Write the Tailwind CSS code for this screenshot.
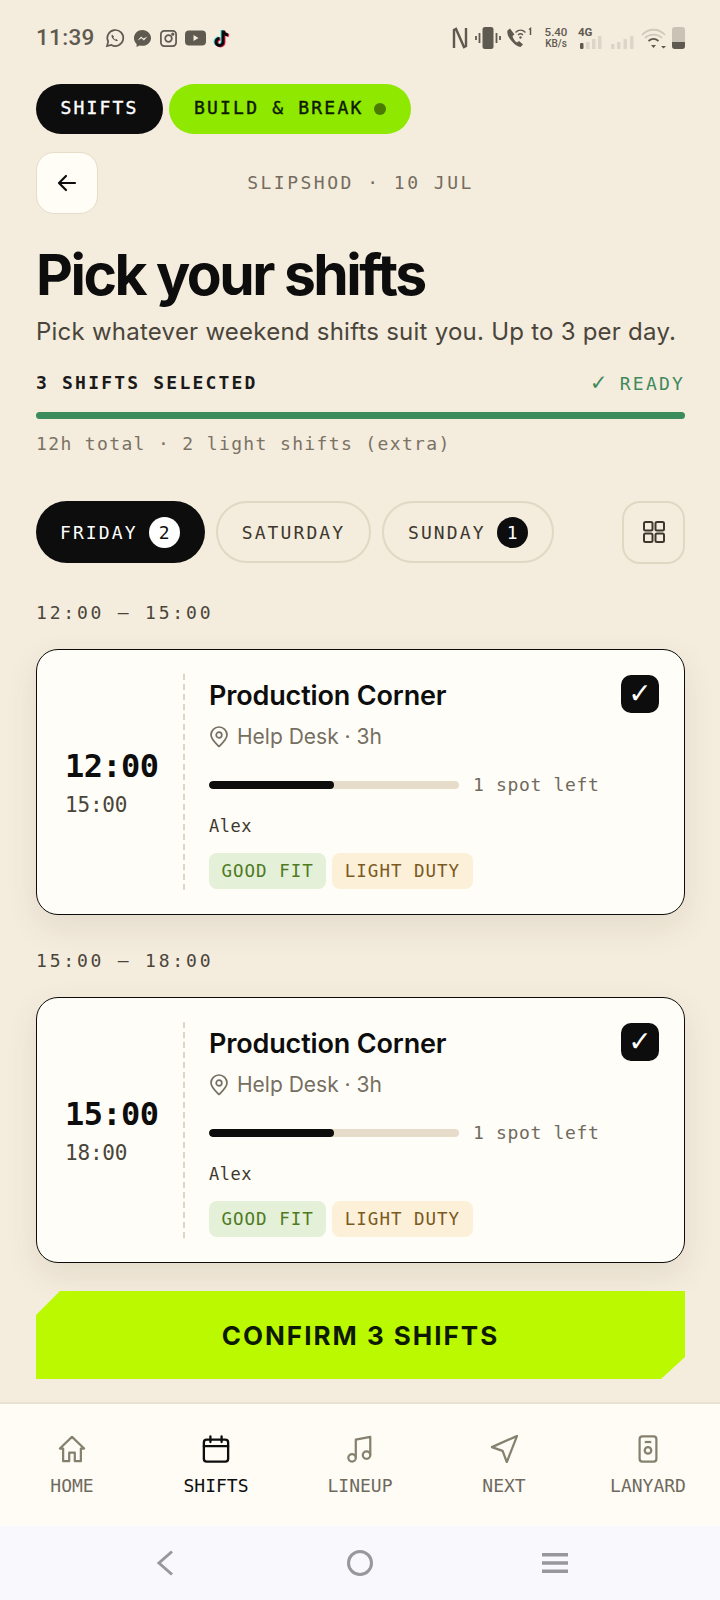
<!DOCTYPE html>
<html lang="en">
<head>
<meta charset="UTF-8">
<meta name="viewport" content="width=device-width, initial-scale=1.0">
<title>Pick your shifts</title>
<script src="https://cdn.jsdelivr.net/npm/@tailwindcss/browser@4"></script>
</head>
<body class="bg-[#f4ecdd] font-['Inter',sans-serif]">
<div class="w-[720px] h-[1600px] overflow-hidden flex flex-col">

  <!-- Status bar -->
  <div class="h-[76px] pl-9 pr-[35px] flex items-center justify-between text-[#5f5a50]">
    <div class="flex items-center gap-[5px]">
      <span class="font-['Roboto',sans-serif] font-medium text-[22.500px] tracking-[0.3px] mr-[5px]">11:39</span>
      <svg class="w-[20px] h-[20px]" viewBox="0 0 20 20" fill="none" stroke="currentColor" stroke-width="1.7"><path d="M2 18l1.2-4.3A8 8 0 1 1 6.4 17z"/><path d="M7 6.500c-1 1 -.6 3 1.300 4.800s3.700 2.300 4.700 1.300l-1.600-1.600-1 .6c-.8-.3-1.700-1.200-2-2l.6-1z" fill="currentColor" stroke="none"/></svg>
      <svg class="w-[19px] h-[19px] ml-[3px]" viewBox="0 0 20 20"><path fill="currentColor" d="M10 1C5 1 1 4.700 1 9.500c0 2.500 1 4.700 2.800 6.200V19l3-1.700c1 .3 2.100.4 3.200.4 5 0 9-3.700 9-8.200S15 1 10 1z"/><path fill="#f4ecdd" d="M4.800 12l3.700-4.200 2.500 2.200 4.200-2.200-3.700 4.200-2.500-2.200z"/></svg>
      <svg class="w-[19px] h-[19px] ml-[2px]" viewBox="0 0 20 20" fill="none" stroke="currentColor" stroke-width="1.800"><rect x="2" y="2" width="16" height="16" rx="3.500"/><circle cx="10" cy="10" r="3.500"/><circle cx="14.500" cy="5.500" r=".8" fill="currentColor"/></svg>
      <svg class="w-[21px] h-[16px] ml-[2px]" viewBox="0 0 21 16"><rect width="21" height="15" y=".5" rx="4" fill="currentColor"/><path d="M8.500 5l5 3-5 3z" fill="#f4ecdd"/></svg>
      <svg class="w-[18px] h-[20px] ml-[2px]" viewBox="0 0 18 20" fill="none" stroke-width="3"><path stroke="#45dfe0" d="M9 2v11.500a3.500 3.500 0 1 1-3.500-3.500M9 2c.4 2.500 2 4 5 4.400"/><path stroke="#f0204f" d="M11 3v11.500a3.500 3.500 0 1 1-3.500-3.500M11 3c.4 2.500 2 4 5 4.400"/><path stroke="#0b0b0b" d="M10 2.500v11.500a3.500 3.500 0 1 1-3.500-3.500M10 2.500c.4 2.500 2 4 5 4.400"/></svg>
    </div>
    <div class="flex items-center">
      <svg class="w-[16px] h-[22px]" viewBox="0 0 16 22" fill="none" stroke="currentColor" stroke-width="2.400"><path d="M2 21V3l2-1 8 18 2-1V1"/></svg>
      <svg class="w-[26px] h-[22px] ml-[7px]" viewBox="0 0 26 22"><rect x="7.500" y="0" width="11" height="22" rx="2.500" fill="currentColor"/><path d="M4.500 6v10M1 9v4M21.500 6v10M25 9v4" stroke="currentColor" stroke-width="1.800" fill="none"/></svg>
      <svg class="w-[26px] h-[22px] ml-[5px]" viewBox="0 0 26 22"><path fill="currentColor" d="M4 1.500 1.500 3.500c-1.500 5 6 15 13 16.500l2.500-2.500-4-3.500-2 1.500c-2-1-4-4-4.500-6.500l2-1.500z"/><path d="M9.500 5.500c3-3 7-3 10 0M12 8c1.500-1.400 3.500-1.400 5 0" fill="none" stroke="currentColor" stroke-width="1.400"/><circle cx="14.500" cy="10.500" r="1.200" fill="currentColor"/><path d="M23 2.500l1.500-1V8" stroke="currentColor" stroke-width="1.500" fill="none"/></svg>
      <div class="ml-[12px] w-[24px] flex flex-col items-center font-['Roboto',sans-serif] font-medium leading-[12px] text-[11.500px]"><span>5.40</span><span class="text-[10px]">KB/s</span></div>
      <div class="ml-[10px] w-[58px] flex flex-col gap-0 relative h-[24px]">
        <span class="font-['Roboto',sans-serif] font-bold text-[11.500px] leading-[12px]">4G</span>
        <svg class="absolute left-0 top-[7px]" width="58" height="17" viewBox="0 0 58 17"><rect x="2" y="10" width="3.500" height="6" rx="1" fill="#5f5a50"/><path fill="#dcd6c9" d="M8 9h3.500v7H8zM14 6h3.500v10H14zM20 3h3.500v13H20zM33 11h3.500v5H33zM39 9h3.500v7H39zM45.500 6h3.500v10h-3.500zM52 3h3.500v13H52z"/></svg>
      </div>
      <svg class="w-[26px] h-[22px] ml-[5px]" viewBox="0 0 26 22" fill="none"><path d="M1 8c6-7 17-7 23 0M4 11c4.500-4.500 12.500-4.500 17 0" stroke="#cfc9bc" stroke-width="1.800"/><path d="M7.500 14c3-2.500 7-2.500 10 0" stroke="#5f5a50" stroke-width="1.800"/><path d="M10 18h5l-2.500 3zM20 19h5l-2.500 2.500z" fill="#5f5a50"/></svg>
      <div class="ml-[5px] w-[13px] h-[22px] rounded-[3px] bg-[#c9c3b5] relative overflow-hidden"><div class="absolute bottom-0 left-0 right-0 h-[7px] bg-[#5f5a50]"></div></div>
    </div>
  </div>

  <!-- Main content -->
  <div class="flex-1 pl-9 pr-[35px] flex flex-col min-h-0">
    <div class="h-[50px] mt-[8px] flex gap-[6px] font-['DejaVu_Sans_Mono',monospace] text-[18px] leading-[24px] tracking-[2.200px] [-webkit-text-stroke:0.4px]">
      <div class="w-[127px] rounded-full bg-[#0d0d0d] text-white flex items-center justify-center pb-[2px]">SHIFTS</div>
      <div class="w-[242px] rounded-full bg-[#8fe800] text-[#0d1a00] flex items-center pl-[25px] pb-[2px]">BUILD &amp; BREAK<span class="ml-[11px] mt-[2px] w-[12px] h-[12px] rounded-full bg-[#4b7a00]"></span></div>
    </div>

    <div class="mt-[18px] h-[62px] relative flex items-center justify-center">
      <div class="absolute left-0 top-0 w-[62px] h-[62px] rounded-[18px] bg-[#fffdf6] border border-[#e5dcc9] flex items-center justify-center">
        <svg class="w-[24px] h-[24px]" viewBox="0 0 24 24" fill="none" stroke="#0d0d0d" stroke-width="2.200" stroke-linecap="round" stroke-linejoin="round"><path d="M20 12H4.500M11 5l-7 7 7 7"/></svg>
      </div>
      <span class="font-['DejaVu_Sans_Mono',monospace] text-[18px] tracking-[2.500px] text-[#756d5f] mb-[2px]">SLIPSHOD · 10 JUL</span>
    </div>

    <h1 class="mt-[28px] text-[57px] leading-[66px] font-bold tracking-[-2.500px] text-[#0d0d0d]">Pick your shifts</h1>
    <p class="mt-[8px] text-[24px] leading-[32px] tracking-[0.24px] text-[#4a453b] whitespace-nowrap">Pick whatever weekend shifts suit you. Up to 3 per day.</p>

    <div class="mt-[22px] flex items-center justify-between font-['DejaVu_Sans_Mono',monospace] text-[18px] leading-[24px] tracking-[2.200px]">
      <span class="font-bold text-[#1a1a1a]">3 SHIFTS SELECTED</span>
      <span class="text-[#3f8a5c]"><span class="text-[24px] leading-none mr-[12px]">✓</span>READY</span>
    </div>
    <div class="mt-[16px] h-[7px] rounded-full bg-[#3b8c5c]"></div>
    <div class="mt-[13px] font-['DejaVu_Sans_Mono',monospace] text-[18px] leading-[24px] tracking-[1.360px] text-[#7a7264] whitespace-nowrap">12h total · 2 light shifts (extra)</div>

    <div class="mt-[45px] h-[62px] flex items-center gap-[11px] font-['DejaVu_Sans_Mono',monospace] text-[18px] tracking-[2.100px]">
      <div class="h-[62px] w-[169px] rounded-full bg-[#0d0d0d] text-white flex items-center pl-[24px]">FRIDAY<span class="ml-[11px] w-[31px] h-[31px] rounded-full bg-white text-[#0d0d0d] tracking-normal flex items-center justify-center">2</span></div>
      <div class="h-[62px] w-[155px] rounded-full border-2 border-[#e1d8c4] text-[#3d382e] flex items-center justify-center">SATURDAY</div>
      <div class="h-[62px] w-[172px] rounded-full border-2 border-[#e1d8c4] text-[#3d382e] flex items-center pl-[24px]">SUNDAY<span class="ml-[11px] w-[31px] h-[31px] rounded-full bg-[#0d0d0d] text-white tracking-normal flex items-center justify-center">1</span></div>
      <div class="ml-auto w-[63px] h-[63px] rounded-[18px] border-2 border-[#e1d8c4] flex items-center justify-center">
        <svg class="w-[24px] h-[24px]" viewBox="0 0 24 24" fill="none" stroke="#3d382e" stroke-width="2"><rect x="2" y="2" width="8.500" height="8.500" rx="1.500"/><rect x="13.500" y="2" width="8.500" height="8.500" rx="1.500"/><rect x="2" y="13.500" width="8.500" height="8.500" rx="1.500"/><rect x="13.500" y="13.500" width="8.500" height="8.500" rx="1.500"/></svg>
      </div>
    </div>

    <!-- Friday 12:00 -->
    <div class="mt-[38px] h-[24px] leading-[24px] font-['DejaVu_Sans_Mono',monospace] text-[18px] tracking-[2.800px] text-[#4a453b]">12:00 – 15:00</div>
    <div class="mt-[24px] h-[266px] shrink-0 rounded-[22px] border-[1.500px] border-[#0d0d0d] bg-[#fffdf7] shadow-[0_12px_32px_rgba(90,70,40,0.10)] flex py-[24px] relative">
      <div class="w-[148px] flex flex-col justify-center pl-[28px] pt-[1px] border-r-2 border-dashed border-[#ddd6c6] font-['DejaVu_Sans_Mono',monospace]">
        <span class="text-[32px] leading-[38px] font-bold tracking-[-0.600px] text-[#0d0d0d]">12:00</span>
        <span class="mt-[6px] text-[21px] leading-[28px] tracking-[-0.200px] text-[#4a453b]">15:00</span>
      </div>
      <div class="pl-[24px] flex-1">
        <div class="text-[27px] leading-[36px] mt-[4px] font-semibold tracking-[-0.150px] text-[#0d0d0d]">Production Corner</div>
        <div class="mt-[8px] flex items-center gap-[8px] text-[21px] leading-[30px] text-[#756f62]">
          <svg class="w-[20px] h-[22px]" viewBox="0 0 20 22" fill="none" stroke="#756f62" stroke-width="1.700"><path d="M10 20.500c-4-4-8-7.500-8-11.500a8 8 0 0 1 16 0c0 4-4 7.500-8 11.500z" stroke-linejoin="round"/><circle cx="10" cy="9" r="2.800"/></svg>
          Help Desk · 3h
        </div>
        <div class="mt-[21px] flex items-center">
          <div class="w-[250px] h-[8px] rounded-full bg-[#e6dcc9] overflow-hidden"><div class="w-1/2 h-full rounded-full bg-[#0d0d0d]"></div></div>
          <span class="ml-[14px] font-['DejaVu_Sans_Mono',monospace] text-[18px] leading-[24px] tracking-[0.660px] text-[#6f6a5e]">1 spot left</span>
        </div>
        <div class="mt-[17px] font-['DejaVu_Sans_Mono',monospace] text-[17px] leading-[24px] tracking-[0.500px] text-[#3d382e]">Alex</div>
        <div class="mt-[15px] flex gap-[6px] font-['DejaVu_Sans_Mono',monospace] text-[17.500px] tracking-[1px]">
          <span class="h-[36px] px-[12.500px] rounded-[8px] bg-[#e4f0d8] text-[#4f7a1f] flex items-center">GOOD FIT</span>
          <span class="h-[36px] px-[12.500px] rounded-[8px] bg-[#fdf0d8] text-[#7a5a1f] flex items-center">LIGHT DUTY</span>
        </div>
      </div>
      <div class="absolute right-[25px] top-[25px] w-[38px] h-[38px] rounded-[10px] bg-[#0d0d0d] flex items-center justify-center text-white font-['DejaVu_Sans',sans-serif] font-bold text-[28px] leading-none">✓</div>
    </div>

    <!-- Friday 15:00 -->
    <div class="mt-[34px] h-[24px] leading-[24px] font-['DejaVu_Sans_Mono',monospace] text-[18px] tracking-[2.800px] text-[#4a453b]">15:00 – 18:00</div>
    <div class="mt-[24px] h-[266px] shrink-0 rounded-[22px] border-[1.500px] border-[#0d0d0d] bg-[#fffdf7] shadow-[0_12px_32px_rgba(90,70,40,0.10)] flex py-[24px] relative">
      <div class="w-[148px] flex flex-col justify-center pl-[28px] pt-[1px] border-r-2 border-dashed border-[#ddd6c6] font-['DejaVu_Sans_Mono',monospace]">
        <span class="text-[32px] leading-[38px] font-bold tracking-[-0.600px] text-[#0d0d0d]">15:00</span>
        <span class="mt-[6px] text-[21px] leading-[28px] tracking-[-0.200px] text-[#4a453b]">18:00</span>
      </div>
      <div class="pl-[24px] flex-1">
        <div class="text-[27px] leading-[36px] mt-[4px] font-semibold tracking-[-0.150px] text-[#0d0d0d]">Production Corner</div>
        <div class="mt-[8px] flex items-center gap-[8px] text-[21px] leading-[30px] text-[#756f62]">
          <svg class="w-[20px] h-[22px]" viewBox="0 0 20 22" fill="none" stroke="#756f62" stroke-width="1.700"><path d="M10 20.500c-4-4-8-7.500-8-11.500a8 8 0 0 1 16 0c0 4-4 7.500-8 11.500z" stroke-linejoin="round"/><circle cx="10" cy="9" r="2.800"/></svg>
          Help Desk · 3h
        </div>
        <div class="mt-[21px] flex items-center">
          <div class="w-[250px] h-[8px] rounded-full bg-[#e6dcc9] overflow-hidden"><div class="w-1/2 h-full rounded-full bg-[#0d0d0d]"></div></div>
          <span class="ml-[14px] font-['DejaVu_Sans_Mono',monospace] text-[18px] leading-[24px] tracking-[0.660px] text-[#6f6a5e]">1 spot left</span>
        </div>
        <div class="mt-[17px] font-['DejaVu_Sans_Mono',monospace] text-[17px] leading-[24px] tracking-[0.500px] text-[#3d382e]">Alex</div>
        <div class="mt-[15px] flex gap-[6px] font-['DejaVu_Sans_Mono',monospace] text-[17.500px] tracking-[1px]">
          <span class="h-[36px] px-[12.500px] rounded-[8px] bg-[#e4f0d8] text-[#4f7a1f] flex items-center">GOOD FIT</span>
          <span class="h-[36px] px-[12.500px] rounded-[8px] bg-[#fdf0d8] text-[#7a5a1f] flex items-center">LIGHT DUTY</span>
        </div>
      </div>
      <div class="absolute right-[25px] top-[25px] w-[38px] h-[38px] rounded-[10px] bg-[#0d0d0d] flex items-center justify-center text-white font-['DejaVu_Sans',sans-serif] font-bold text-[28px] leading-none">✓</div>
    </div>

    <button class="mt-[28px] h-[88px] shrink-0 bg-[#bbf900] text-[#0d1a00] text-[26px] font-bold tracking-[2px] [clip-path:polygon(24px_0,100%_0,100%_calc(100%-22px),calc(100%-24px)_100%,0_100%,0_24px)]">CONFIRM 3 SHIFTS</button>
  </div>

  <!-- Tab bar -->
  <nav class="h-[124px] shrink-0 bg-[#fffcf5] border-t-2 border-[#e8e0d0] grid grid-cols-5 pt-[31px] font-['DejaVu_Sans_Mono',monospace] text-[18px] text-[#6f6a5e]">
    <div class="flex flex-col items-center gap-[12px]">
      <svg class="w-[28px] h-[28px]" viewBox="0 0 30 30" fill="none" stroke="#86816f" stroke-width="2.400" stroke-linejoin="round" stroke-linecap="round"><path d="M15 2 2 14.500h3.500V28h6.500v-9h6v9h6.500V14.500H28z"/></svg>
      <span class="leading-[22px]">HOME</span>
    </div>
    <div class="flex flex-col items-center gap-[12px] text-[#0d0d0d]">
      <svg class="w-[28px] h-[28px]" viewBox="0 0 30 30" fill="none" stroke="#0d0d0d" stroke-width="2.500" stroke-linecap="round"><rect x="2" y="5" width="26" height="23.500" rx="3"/><path d="M2 12h26M9 1.500v6M21 1.500v6"/></svg>
      <span class="leading-[22px]">SHIFTS</span>
    </div>
    <div class="flex flex-col items-center gap-[12px]">
      <svg class="w-[28px] h-[28px]" viewBox="0 0 30 30" fill="none" stroke="#86816f" stroke-width="2.400" stroke-linejoin="round"><circle cx="6.500" cy="24.500" r="4"/><circle cx="22" cy="21.500" r="4"/><path d="M10.500 24.500V5L26 2v19.500"/></svg>
      <span class="leading-[22px]">LINEUP</span>
    </div>
    <div class="flex flex-col items-center gap-[12px]">
      <svg class="w-[28px] h-[28px]" viewBox="0 0 30 30" fill="none" stroke="#86816f" stroke-width="2.400" stroke-linejoin="round"><path d="M29 1 2 13l11.500 4L18 29z"/></svg>
      <span class="leading-[22px]">NEXT</span>
    </div>
    <div class="flex flex-col items-center gap-[12px]">
      <svg class="w-[28px] h-[28px]" viewBox="0 0 30 30" fill="none" stroke="#86816f" stroke-width="2.400"><rect x="6" y="1.500" width="18" height="27" rx="3"/><circle cx="15" cy="16.500" r="3.500"/><path d="M11.500 7.500h7"/></svg>
      <span class="leading-[22px]">LANYARD</span>
    </div>
  </nav>

  <!-- System navigation -->
  <div class="h-[74px] shrink-0 bg-[#f9f8fd] grid grid-cols-[195px_195px_195px] justify-center place-items-center">
    <svg class="w-[20px] h-[26px]" viewBox="0 0 20 26" fill="none" stroke="#97979c" stroke-width="3"><path d="M17 1.500 4 13l13 11.500"/></svg>
    <svg class="w-[28px] h-[28px]" viewBox="0 0 28 28" fill="none" stroke="#97979c" stroke-width="3"><circle cx="14" cy="14" r="11.500"/></svg>
    <svg class="w-[28px] h-[22px]" viewBox="0 0 28 22" fill="#97979c"><path d="M1 1h26v3.500H1zM1 9.250h26v3.500H1zM1 17.500h26V21H1z"/></svg>
  </div>
</div>
</body>
</html>
